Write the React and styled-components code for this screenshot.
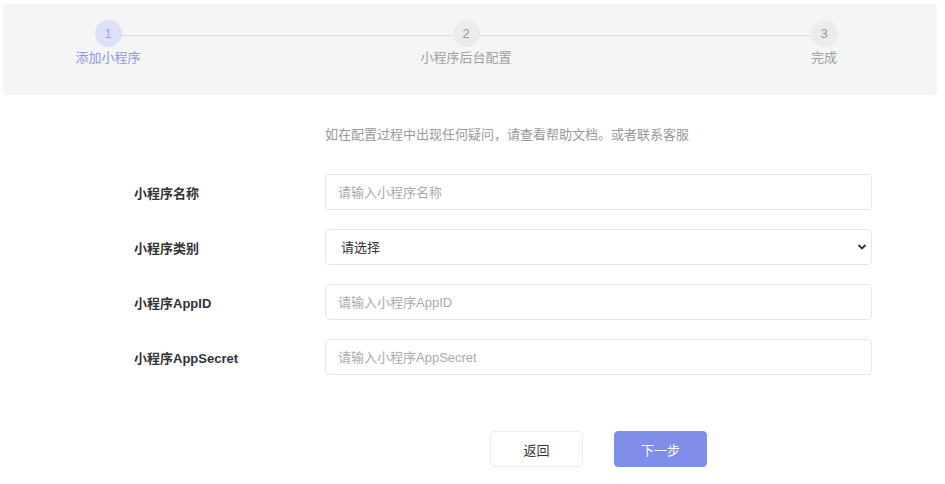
import React from 'react';
import styled, { createGlobalStyle } from 'styled-components';

const GlobalStyle = createGlobalStyle`
  body {
    margin: 0;
    background: #fff;
    font-family: "Liberation Sans", "Noto Sans CJK SC", sans-serif;
    font-size: 13px;
    color: #333;
  }
`;

const Page = styled.div`
  width: 945px;
  padding-top: 4px;
`;

const StepsPanel = styled.div`
  margin: 0 8px 0 3px;
  height: 91px;
  box-sizing: border-box;
  padding: 16px 73px 0 65px;
  background: #f5f5f5;
  border-radius: 4px;
  display: flex;
  align-items: flex-start;
`;

const Step = styled.div`
  width: 80px;
  display: flex;
  flex-direction: column;
  align-items: center;
`;

const Circle = styled.div`
  width: 27px;
  height: 27px;
  border-radius: 50%;
  background: ${(p) => (p.$active ? '#dde0f8' : '#ececec')};
  color: ${(p) => (p.$active ? '#97a0ea' : '#999')};
  display: flex;
  align-items: center;
  justify-content: center;
  font-size: 13px;
`;

const StepLabel = styled.div`
  margin-top: 2px;
  line-height: 18px;
  white-space: nowrap;
  color: ${(p) => (p.$active ? '#8e98ea' : '#a0a0a0')};
`;

const Connector = styled.div`
  flex: 1;
  height: 1px;
  margin: 15px -26px 0;
  background: #d9d9d9;
`;

const Form = styled.div`
  display: grid;
  grid-template-columns: 191px 547px;
  row-gap: 19px;
  padding-left: 134px;
  margin-top: 30px;
`;

const Help = styled.div`
  grid-column: 2;
  color: #999;
  line-height: 20px;
  margin-bottom: 10px;
`;

const Label = styled.label`
  font-weight: bold;
  color: #333;
  display: flex;
  align-items: center;
  height: 36px;
`;

const Input = styled.input`
  height: 36px;
  box-sizing: border-box;
  border: 1px solid #e8e8e8;
  border-radius: 4px;
  padding: 0 12px;
  font: inherit;
  color: #333;
  outline: none;
  &::placeholder {
    color: #aaa;
  }
`;

const SelectWrap = styled.div`
  position: relative;
  height: 36px;
`;

const Select = styled.select`
  width: 100%;
  height: 36px;
  box-sizing: border-box;
  border: 1px solid #e8e8e8;
  border-radius: 4px;
  padding: 0 15px;
  font: inherit;
  color: #333;
  background: #fff;
  appearance: none;
  outline: none;
`;

const Chevron = styled.svg`
  position: absolute;
  right: 5px;
  top: 14px;
  pointer-events: none;
`;

const Actions = styled.div`
  grid-column: 2;
  display: flex;
  justify-content: center;
  gap: 31px;
  margin-top: 37px;
`;

const Button = styled.button`
  width: 93px;
  height: 36px;
  border-radius: 4px;
  font: inherit;
  font-size: 13px;
  cursor: pointer;
  border: 1px solid ${(p) => (p.$primary ? '#7f8fe9' : '#ececec')};
  background: ${(p) => (p.$primary ? '#7f8fe9' : '#fff')};
  color: ${(p) => (p.$primary ? '#fff' : '#333')};
`;

const steps = ['添加小程序', '小程序后台配置', '完成'];

export default function App() {
  return (
    <Page>
      <GlobalStyle />
      <StepsPanel>
        {steps.map((s, i) => (
          <React.Fragment key={s}>
            {i > 0 && <Connector />}
            <Step>
              <Circle $active={i === 0}>{i + 1}</Circle>
              <StepLabel $active={i === 0}>{s}</StepLabel>
            </Step>
          </React.Fragment>
        ))}
      </StepsPanel>

      <Form>
        <Help>如在配置过程中出现任何疑问，请查看帮助文档。或者联系客服</Help>

        <Label>小程序名称</Label>
        <Input placeholder="请输入小程序名称" />

        <Label>小程序类别</Label>
        <SelectWrap>
          <Select defaultValue="">
            <option value="">请选择</option>
          </Select>
          <Chevron width="10" height="8" viewBox="0 0 10 8">
            <path d="M1.5 2 L5 5.5 L8.5 2" fill="none" stroke="#333" strokeWidth="1.8" />
          </Chevron>
        </SelectWrap>

        <Label>小程序AppID</Label>
        <Input placeholder="请输入小程序AppID" />

        <Label>小程序AppSecret</Label>
        <Input placeholder="请输入小程序AppSecret" />

        <Actions>
          <Button>返回</Button>
          <Button $primary>下一步</Button>
        </Actions>
      </Form>
    </Page>
  );
}
